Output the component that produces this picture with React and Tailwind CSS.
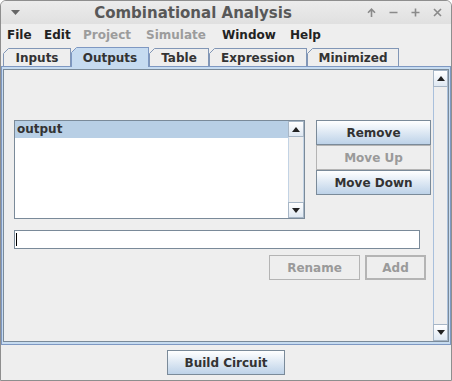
import React from 'react';

const ArrowBox = ({ dir, className = '' }) => (
  <div className={`flex items-center justify-center border border-[#a7b6c6] bg-linear-to-b from-[#ffffff] to-[#dfe8f2] ${className}`}>
    <svg width="8" height="5" viewBox="0 0 8 5">
      {dir === 'up' ? <polygon points="0,5 8,5 4,0" fill="#222" /> : <polygon points="0,0 8,0 4,5" fill="#222" />}
    </svg>
  </div>
);

const Btn = ({ children, className = '' }) => (
  <div className={`flex items-center justify-center border border-[#7a8a99] bg-linear-to-b from-[#ffffff] to-[#bdd2e8] text-[12px] font-bold text-[#333333] ${className}`}>
    {children}
  </div>
);

const DisabledBtn = ({ children, className = '' }) => (
  <div className={`flex items-center justify-center border-[#b4b4b4] bg-[#eeeeee] text-[12px] font-bold text-[#9a9a9a] ${className}`}>
    {children}
  </div>
);

const Tab = ({ label, width, selected }) => (
  <div
    className={`relative flex items-center justify-center border-l border-r border-t text-[12px] font-bold text-[#333333] ${width} ${
      selected ? 'h-[20px] -mb-px bg-[#c6dbf0] border-[#7e98c2] z-10' : 'h-[18px] bg-[#eeeeee] border-[#8196b6]'
    }`}
  >
    <svg className="absolute -left-px -top-px" width="6" height="6" viewBox="0 0 6 6">
      <polygon points="0,0 6,0 0,6" fill="#eeeeee" />
      <line x1="0.5" y1="5.5" x2="5.5" y2="0.5" stroke={selected ? '#7e98c2' : '#8196b6'} strokeWidth="1" />
    </svg>
    <span className="pt-[1px]">{label}</span>
  </div>
);

export default function App() {
  const menus = [
    { label: 'File', w: 'w-[37px]' },
    { label: 'Edit', w: 'w-[39px]' },
    { label: 'Project', w: 'w-[63px]', off: true },
    { label: 'Simulate', w: 'w-[76px]', off: true },
    { label: 'Window', w: 'w-[68px]' },
    { label: 'Help', w: 'w-[50px]' },
  ];

  return (
    <div className="w-[452px] h-[381px] bg-white font-['DejaVu_Sans',sans-serif]">
      <div className="w-full h-full flex flex-col bg-[#eeeeee] border border-[#8e8e8e] rounded-t-[6px] overflow-hidden">
        {/* title bar */}
        <div className="h-[23px] flex items-center bg-linear-to-b from-[#ececec] to-[#e0e0e0]">
          <div className="w-[25px] flex items-center pl-[10px]">
            <svg width="9" height="5" viewBox="0 0 9 5">
              <polygon points="0,0 9,0 4.5,5" fill="#666" />
            </svg>
          </div>
          <div className="flex-1 text-center text-[15px] font-bold text-[#585858] leading-none pt-[1px]">
            Combinational Analysis
          </div>
          <div className="flex items-center pr-[3px]">
            <div className="w-[22px] flex justify-center">
              <svg width="9" height="9" viewBox="0 0 9 9" fill="none" stroke="#8a8a8a" strokeWidth="1.6">
                <path d="M4.5 9V1.5M1 4.8L4.5 1.2L8 4.8" />
              </svg>
            </div>
            <div className="w-[22px] flex justify-center">
              <svg width="9" height="9" viewBox="0 0 9 9" fill="none" stroke="#8a8a8a" strokeWidth="1.6">
                <path d="M0.5 4.5H8.5" />
              </svg>
            </div>
            <div className="w-[22px] flex justify-center">
              <svg width="9" height="9" viewBox="0 0 9 9" fill="none" stroke="#8a8a8a" strokeWidth="1.6">
                <path d="M0.5 4.5H8.5M4.5 0.5V8.5" />
              </svg>
            </div>
            <div className="w-[22px] flex justify-center">
              <svg width="9" height="9" viewBox="0 0 9 9" fill="none" stroke="#8a8a8a" strokeWidth="1.6">
                <path d="M1 1L8 8M8 1L1 8" />
              </svg>
            </div>
          </div>
        </div>

        {/* menu bar */}
        <div className="h-[21px] flex items-center pl-[6px] text-[12px] font-bold">
          {menus.map((m) => (
            <div key={m.label} className={`${m.w} ${m.off ? 'text-[#9c9c9c]' : 'text-[#222222]'}`}>
              {m.label}
            </div>
          ))}
        </div>

        {/* tabs */}
        <div className="mt-[2px] h-[19px] flex items-end pl-[2px]">
          <Tab label="Inputs" width="w-[68px]" />
          <Tab label="Outputs" width="w-[78px]" selected />
          <Tab label="Table" width="w-[60px]" />
          <Tab label="Expression" width="w-[98px]" />
          <Tab label="Minimized" width="w-[92px]" />
        </div>

        {/* tab panel */}
        <div className="h-[279px] border border-[#7e98c2] bg-[#c6dbf0] px-[1px] py-[2px]">
          <div className="h-full flex border border-[#7a8a99] bg-[#eeeeee]">
            <div className="flex-1 pl-[10px] pt-[50px]">
              <div className="flex">
                <div className="w-[291px] h-[99px] flex border border-[#7a8a99] bg-white">
                  <div className="flex-1">
                    <div className="h-[17px] bg-[#b8cfe5] pl-[2px] text-[12px] font-bold text-[#333333] leading-[17px]">
                      output
                    </div>
                  </div>
                  <div className="w-[16px] flex flex-col bg-[#eeeeee]">
                    <ArrowBox dir="up" className="h-[16px]" />
                    <div className="flex-1 border-l border-r border-[#c3d3e4]" />
                    <ArrowBox dir="down" className="h-[16px]" />
                  </div>
                </div>
                <div className="ml-[11px] w-[115px] flex flex-col">
                  <Btn className="h-[25px]">Remove</Btn>
                  <DisabledBtn className="h-[25px] border">Move Up</DisabledBtn>
                  <Btn className="h-[25px]">Move Down</Btn>
                </div>
              </div>
              <div className="mt-[11px] w-[406px] h-[19px] border border-[#7a8a99] bg-white flex items-center pl-[1px]">
                <div className="w-px h-[13px] bg-black" />
              </div>
              <div className="mt-[6px] ml-[255px] flex">
                <DisabledBtn className="w-[91px] h-[25px] border">Rename</DisabledBtn>
                <DisabledBtn className="ml-[5px] w-[61px] h-[25px] border-2 border-[#a9a9a9]">Add</DisabledBtn>
              </div>
            </div>
            <div className="w-[15px] flex flex-col">
              <ArrowBox dir="up" className="h-[17px]" />
              <div className="flex-1 border-l border-r border-[#a9c0dc]" />
              <ArrowBox dir="down" className="h-[17px]" />
            </div>
          </div>
        </div>

        {/* footer */}
        <div className="flex-1 flex justify-center pt-[5px]">
          <Btn className="w-[118px] h-[25px]">Build Circuit</Btn>
        </div>
      </div>
    </div>
  );
}
